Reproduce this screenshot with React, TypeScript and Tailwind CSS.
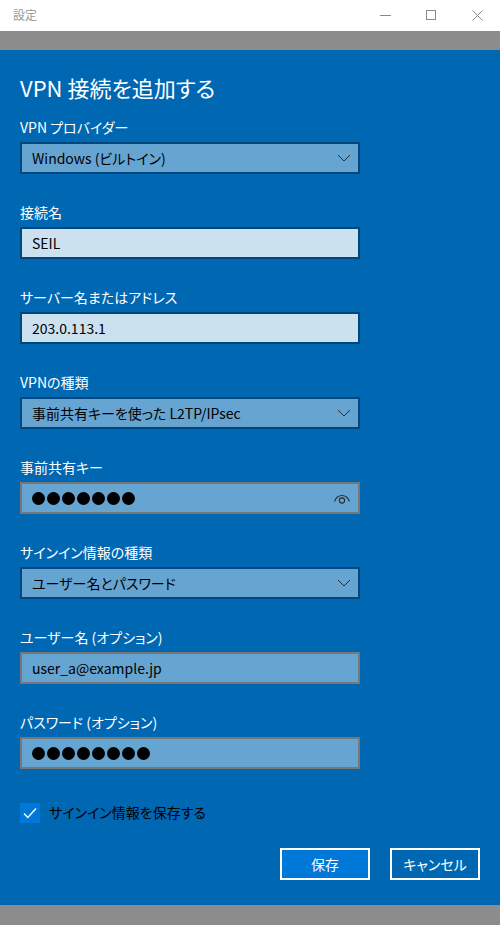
import type React from "react"

const font = { fontFamily: '"Noto Sans CJK JP", "Noto Sans", sans-serif' }

function Chevron() {
  return (
    <svg width="14" height="8" viewBox="0 0 14 8" className="shrink-0">
      <polyline points="1,1 7,7 13,1" fill="none" stroke="#2b2b2b" strokeWidth="1" />
    </svg>
  )
}

function Eye() {
  return (
    <svg width="18" height="14" viewBox="0 0 18 14" className="shrink-0">
      <path d="M1.5 10.5 C4.5 2.5 13.5 2.5 16.5 10.5" fill="none" stroke="#2b2b2b" strokeWidth="1.1" />
      <circle cx="9" cy="9.5" r="2.6" fill="none" stroke="#2b2b2b" strokeWidth="1.1" />
    </svg>
  )
}

function Dots({ n }: { n: number }) {
  return (
    <div className="flex gap-[2px]">
      {Array.from({ length: n }).map((_, i) => (
        <span key={i} className="block h-[13px] w-[13px] rounded-full bg-black" />
      ))}
    </div>
  )
}

function Field({
  label,
  kind,
  children,
  right,
}: {
  label: string
  kind: "select" | "text" | "soft"
  children: React.ReactNode
  right?: React.ReactNode
}) {
  const box =
    kind === "text"
      ? "border-[#00467f] bg-[#cce1f0]"
      : kind === "select"
        ? "border-[#00467f] bg-[#66a5d2]"
        : "border-[#777777] bg-[#66a5d2]"
  return (
    <div className="flex flex-col">
      <div className="h-[20px] text-[14px] leading-[20px] text-white">{label}</div>
      <div
        className={`mt-[5px] flex h-[32px] w-[340px] items-center justify-between border-2 pl-[10px] pr-[7px] text-[14px] text-black ${box}`}
      >
        <div className="flex items-center">{children}</div>
        {right}
      </div>
    </div>
  )
}

export default function App() {
  return (
    <div className="flex h-[925px] w-[500px] flex-col bg-white [font-feature-settings:'palt']" style={font}>
      <div className="flex h-[31px] items-center justify-between bg-white pl-[13px]">
        <span className="text-[12px] text-[#999999]">設定</span>
        <div className="flex h-full items-center">
          <div className="flex h-full w-[46px] items-center justify-center">
            <span className="block h-px w-[11px] bg-[#8a8a8a]" />
          </div>
          <div className="flex h-full w-[46px] items-center justify-center">
            <span className="block h-[10px] w-[10px] border border-[#8a8a8a]" />
          </div>
          <div className="flex h-full w-[46px] items-center justify-center">
            <svg width="11" height="11" viewBox="0 0 11 11">
              <path d="M0.5 0.5 L10.5 10.5 M10.5 0.5 L0.5 10.5" stroke="#8a8a8a" strokeWidth="1" />
            </svg>
          </div>
        </div>
      </div>
      <div className="h-[20px] bg-[#8c8c8c]" />
      <div className="flex flex-1 flex-col bg-[#0067b3] px-[20px] pt-[22px] pb-[25px]">
        <h1 className="h-[30px] text-[22px] leading-[30px] text-white">VPN 接続を追加する</h1>
        <div className="mt-[15px] flex flex-col gap-[28px]">
          <Field label="VPN プロバイダー" kind="select" right={<Chevron />}>
            Windows (ビルトイン)
          </Field>
          <Field label="接続名" kind="text">
            SEIL
          </Field>
          <Field label="サーバー名またはアドレス" kind="text">
            203.0.113.1
          </Field>
          <Field label="VPNの種類" kind="select" right={<Chevron />}>
            事前共有キーを使った L2TP/IPsec
          </Field>
          <Field label="事前共有キー" kind="soft" right={<Eye />}>
            <Dots n={7} />
          </Field>
          <Field label="サインイン情報の種類" kind="select" right={<Chevron />}>
            ユーザー名とパスワード
          </Field>
          <Field label="ユーザー名 (オプション)" kind="soft">
            user_a@example.jp
          </Field>
          <Field label="パスワード (オプション)" kind="soft">
            <Dots n={8} />
          </Field>
        </div>
        <label className="mt-[33px] flex items-center gap-[9px]">
          <span className="flex h-[20px] w-[20px] items-center justify-center bg-[#0078d7]">
            <svg width="14" height="12" viewBox="0 0 14 12">
              <polyline points="1,6.5 4.8,10.5 13,1.5" fill="none" stroke="white" strokeWidth="1.4" />
            </svg>
          </span>
          <span className="text-[14px] text-black">サインイン情報を保存する</span>
        </label>
        <div className="mt-[25px] flex justify-end gap-[20px]">
          <button className="h-[32px] w-[90px] border-2 border-white bg-[#0078d7] text-[14px] text-white">
            保存
          </button>
          <button className="h-[32px] w-[90px] border-2 border-white bg-[#0067b3] text-[14px] text-white">
            キャンセル
          </button>
        </div>
      </div>
      <div className="h-[20px] bg-[#8c8c8c]" />
    </div>
  )
}
